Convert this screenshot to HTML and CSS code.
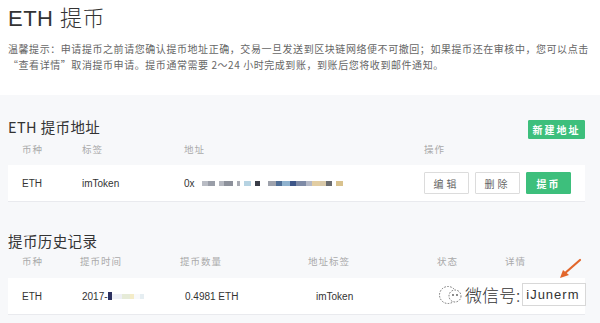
FILE: index.html
```html
<!DOCTYPE html>
<html lang="zh">
<head>
<meta charset="utf-8">
<link rel="stylesheet" href="styles.css">
</head>
<body>
<div class="top">
  <h1 class="title">ETH 提币</h1>
  <p class="notice">温馨提示：申请提币之前请您确认提币地址正确，交易一旦发送到区块链网络便不可撤回；如果提币还在审核中，您可以点击“查看详情”取消提币申请。提币通常需要 2～24 小时完成到账，到账后您将收到邮件通知。</p>
</div>
<div class="main">
  <div class="sec-head">
    <h2 class="sec-title">ETH 提币地址</h2>
    <button class="btn btn-green btn-new">新建地址</button>
  </div>
  <div class="thead addr-grid">
    <span>币种</span><span>标签</span><span>地址</span><span>操作</span>
  </div>
  <div class="trow addr-grid">
    <span>ETH</span>
    <span>imToken</span>
    <span class="addr">0x
      <i class="blk" style="width:6px;background:#b9bcc4"></i><i class="blk" style="width:7px;background:#9a9ea8"></i><i class="gap"></i>
      <i class="blk" style="width:5px;background:#b5b8c0"></i><i class="blk" style="width:9px;background:#8d919b"></i><i class="gap"></i>
      <i class="blk" style="width:3px;background:#a9acb4"></i><i class="gap"></i>
      <i class="blk" style="width:7px;background:#b6d3e2"></i><i class="gap"></i>
      <i class="blk" style="width:5px;background:#3a3d48"></i><i class="gap"></i><i class="gap"></i>
      <i class="blk" style="width:8px;background:#9ea2ac"></i><i class="blk" style="width:6px;background:#4f6e96"></i><i class="blk" style="width:8px;background:#8fb2cf"></i><i class="blk" style="width:6px;background:#3d5588"></i><i class="blk" style="width:10px;background:#7e8aa6"></i><i class="blk" style="width:6px;background:#b4b8c6"></i><i class="blk" style="width:8px;background:#e2cda2"></i><i class="blk" style="width:6px;background:#d8c8a8"></i><i class="blk" style="width:6px;background:#6a6c70"></i><i class="gap"></i>
      <i class="blk" style="width:7px;background:#d9c28e"></i>
    </span>
    <span class="ops">
      <button class="btn btn-line">编辑</button>
      <button class="btn btn-line">删除</button>
      <button class="btn btn-green">提币</button>
    </span>
  </div>

  <h2 class="sec-title hist-title">提币历史记录</h2>
  <div class="thead hist-grid">
    <span>币种</span><span>提币时间</span><span>提币数量</span><span>地址标签</span><span>状态</span><span>详情</span>
  </div>
  <div class="trow hist-grid">
    <span>ETH</span>
    <span class="time">2017-<i class="blk" style="width:4px;height:8px;background:#2d3160"></i><i class="blk" style="width:10px;background:#eef0f6"></i><i class="blk" style="width:8px;background:#e6ebd8"></i><i class="blk" style="width:4px;background:#f4ecc8"></i><i class="blk" style="width:6px;background:#f8f9fb"></i><i class="blk" style="width:4px;background:#e6eef2"></i></span>
    <span class="amt">0.4981 ETH</span>
    <span class="tag">imToken</span>
    <span></span>
    <span></span>
  </div>
  <div class="watermark">
    <svg class="wm-icon" width="26" height="22" viewBox="0 0 26 22">
      <circle cx="10" cy="11" r="8.5" fill="none" stroke="#666" stroke-width="0.9" stroke-dasharray="1.6 1.4"/>
      <circle cx="17" cy="12" r="6" fill="#fff" stroke="#666" stroke-width="0.9" stroke-dasharray="1.6 1.4"/>
      <circle cx="15" cy="11" r="0.9" fill="#555"/>
      <circle cx="19" cy="11" r="0.9" fill="#555"/>
    </svg>
    <span class="wm-text">微信号:</span><span class="wm-box">iJunerm</span>
  </div>
  <svg class="arrow" width="24" height="22" viewBox="0 0 24 22">
    <path d="M22 2 L6 16" stroke="#e2672c" stroke-width="2.2" stroke-linecap="round"/>
    <path d="M2 20 L11 17 L5 12 Z" fill="#e2672c"/>
  </svg>
</div>
</body>
</html>
```

FILE: styles.css
```css
* { box-sizing: border-box; }
html, body {
  margin: 0;
  padding: 0;
  width: 600px;
  height: 323px;
  overflow: hidden;
  font-family: "Noto Sans CJK SC", "Liberation Sans", sans-serif;
  color: #333;
  background: #f7f8fa;
}
.top {
  background: #fff;
  height: 95px;
  padding: 5px 6px 0 8px;
}
.title {
  margin: 0;
  font-size: 22px;
  line-height: 28px;
  font-weight: 300;
  color: #333;
  letter-spacing: 0.5px;
  font-family: "Liberation Sans", "Noto Sans CJK SC", sans-serif;
}
.notice {
  margin: 8px 0 0;
  font-size: 10px;
  line-height: 16px;
  letter-spacing: 0.56px;
  color: #666;
}
.main {
  position: relative;
  padding: 21px 15px 0 8px;
}
.sec-head {
  display: flex;
  justify-content: space-between;
  align-items: center;
  height: 22px;
}
.sec-title {
  margin: 0;
  font-size: 14.5px;
  line-height: 20px;
  font-weight: 400;
  color: #333;
  letter-spacing: 0.4px;
}
.btn {
  font-family: "Noto Sans CJK SC", sans-serif;
  font-size: 10px;
  letter-spacing: 2px;
  border-radius: 1px;
  cursor: pointer;
  padding: 0;
}
.btn-green {
  background: #3dbf7c;
  color: #fff;
  border: 1px solid #3dbf7c;
  font-weight: 700;
}
.btn-new {
  width: 57px;
  height: 19px;
  margin-top: 4px;
}
.btn-line {
  background: #fff;
  color: #666;
  border: 1px solid #dcdcdc;
  letter-spacing: 3px;
}
.ops {
  display: flex;
  gap: 6px;
}
.ops .btn {
  width: 45px;
  height: 22px;
}
.thead {
  height: 27px;
  padding: 4px 0 0 14px;
  font-size: 9.5px;
  line-height: 14px;
  color: #aaa;
  letter-spacing: 1px;
}
.trow {
  background: #fff;
  height: 37px;
  padding-left: 14px;
  font-size: 10px;
  color: #333;
  border-bottom: 1px solid #e9eaee;
  align-items: center;
  font-family: "Liberation Sans", "Noto Sans CJK SC", sans-serif;
}
.addr-grid {
  display: grid;
  grid-template-columns: 60px 102px 240px 1fr;
}
.thead.addr-grid { align-items: start; }
.hist-grid {
  display: grid;
  grid-template-columns: 58px 100px 128px 129px 68px 1fr;
}
.trow.hist-grid .time { padding-left: 2px; }
.trow.hist-grid .amt { padding-left: 5px; }
.trow.hist-grid .tag { padding-left: 8px; }
.addr {
  display: flex;
  align-items: center;
}
.addr > .blk:first-of-type { margin-left: 7px; }
.blk {
  display: inline-block;
  height: 5px;
  vertical-align: middle;
}
.gap {
  display: inline-block;
  width: 4px;
}
.time {
  display: flex;
  align-items: center;
}
.hist-title {
  margin-top: 29px;
}
.hist-title + .thead { padding-top: 3px; }
.watermark {
  position: absolute;
  left: 438px;
  top: 188px;
  display: flex;
  align-items: center;
  color: #222;
}
.wm-icon { margin-right: 1px; }
.wm-text {
  font-size: 17px;
  line-height: 20px;
  font-weight: 300;
  color: #333;
}
.wm-box {
  margin-left: 2px;
  height: 23px;
  width: 64px;
  padding: 0 3px;
  background: #fff;
  border: 1px solid #d8d8d8;
  font-size: 13px;
  line-height: 21px;
  letter-spacing: 1px;
  font-family: "Liberation Sans", sans-serif;
  color: #333;
}
.arrow {
  position: absolute;
  left: 558px;
  top: 163px;
}
```
